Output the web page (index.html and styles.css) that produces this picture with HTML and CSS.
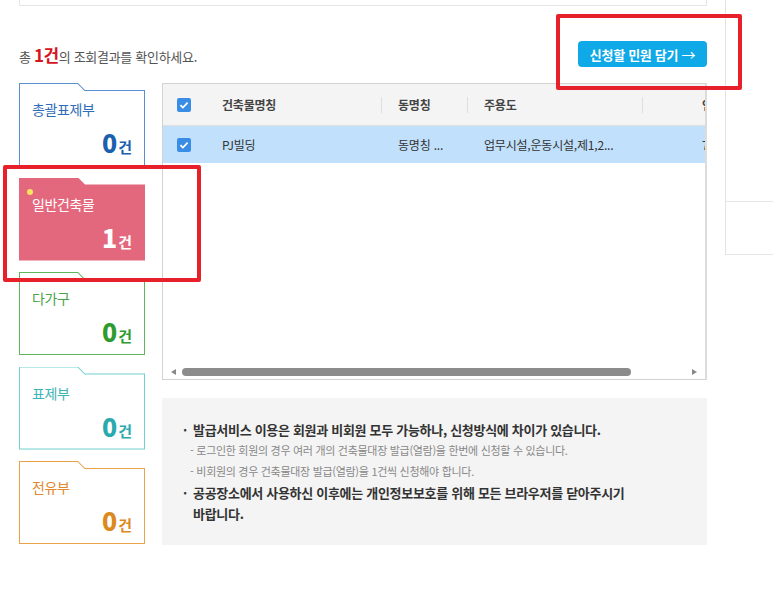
FILE: index.html
```html
<!DOCTYPE html>
<html lang="ko">
<head>
  <meta charset="UTF-8" />
  <meta name="viewport" content="width=device-width, initial-scale=1" />
  <title>건축물대장 조회결과</title>
  <link rel="stylesheet" href="styles.css">
</head>
<body>

  <div class="page">
    <div class="main">
      <div class="search-box"></div>

      <div class="result-bar">
        <p class="result-count">총 <strong>1건</strong>의 조회결과를 확인하세요.</p>
        <button class="btn-add" type="button">신청할 민원 담기 <span class="arrow">→</span></button>
      </div>

      <div class="result">
        <ul class="type-list">
          <li class="type type-total">
            <span class="type-name">총괄표제부</span>
            <span class="type-count"><b>0</b>건</span>
          </li>
          <li class="type type-general active">
            <span class="type-name">일반건축물</span>
            <span class="type-count"><b>1</b>건</span>
          </li>
          <li class="type type-multi">
            <span class="type-name">다가구</span>
            <span class="type-count"><b>0</b>건</span>
          </li>
          <li class="type type-title">
            <span class="type-name">표제부</span>
            <span class="type-count"><b>0</b>건</span>
          </li>
          <li class="type type-unit">
            <span class="type-name">전유부</span>
            <span class="type-count"><b>0</b>건</span>
          </li>
        </ul>

        <div class="result-body">
          <div class="grid">
            <div class="grid-head">
              <div class="cell cell-check">
                <svg class="check" viewBox="0 0 14 14"><rect width="14" height="14" rx="2" fill="#3a8de4"/><path d="M3.4 7.1l2.5 2.5 4.7-4.9" fill="none" stroke="#fff" stroke-width="1.7"/></svg>
              </div>
              <div class="cell">건축물명칭</div>
              <div class="cell sep">동명칭</div>
              <div class="cell sep">주용도</div>
              <div class="cell sep cell-last">연면적</div>
            </div>
            <div class="grid-row selected">
              <div class="cell cell-check">
                <svg class="check" viewBox="0 0 14 14"><rect width="14" height="14" rx="2" fill="#3a8de4"/><path d="M3.4 7.1l2.5 2.5 4.7-4.9" fill="none" stroke="#fff" stroke-width="1.7"/></svg>
              </div>
              <div class="cell">PJ빌딩</div>
              <div class="cell">동명칭 ...</div>
              <div class="cell">업무시설,운동시설,제1,2...</div>
              <div class="cell cell-last">7,512.3</div>
            </div>
            <div class="grid-empty"></div>
            <div class="grid-scroll">
              <span class="scroll-arrow left"></span>
              <span class="scroll-thumb"></span>
              <span class="scroll-arrow right"></span>
            </div>
          </div>

          <div class="notice">
            <ul>
              <li class="notice-main">발급서비스 이용은 회원과 비회원 모두 가능하나, 신청방식에 차이가 있습니다.</li>
              <li class="notice-sub">- 로그인한 회원의 경우 여러 개의 건축물대장 발급(열람)을 한번에 신청할 수 있습니다.</li>
              <li class="notice-sub">- 비회원의 경우 건축물대장 발급(열람)을 1건씩 신청해야 합니다.</li>
              <li class="notice-main">공공장소에서 사용하신 이후에는 개인정보보호를 위해 모든 브라우저를 닫아주시기 바랍니다.</li>
            </ul>
          </div>
        </div>
      </div>
    </div>

    <aside class="side">
      <div class="side-top"></div>
      <div class="side-bottom"></div>
    </aside>
  </div>

  <!-- 강조 표시 -->
  <div class="mark mark-btn"></div>
  <div class="mark mark-card"></div>

</body>
</html>
```

FILE: styles.css
```css
body {
  margin: 0;
  background: #fff;
  font-family: "Noto Sans CJK KR", "Noto Sans", sans-serif;
  color: #333;
}

ul {
  margin: 0;
  padding: 0;
  list-style: none;
}

.page {
  display: flex;
  align-items: flex-start;
}

.main {
  width: 688px;
  padding-left: 19px;
}

.search-box {
  height: 5px;
  border: 1px solid #e6e6e6;
  border-top: 0;
}

/* 조회결과 건수 + 담기 버튼 */
.result-bar {
  display: flex;
  align-items: center;
  justify-content: space-between;
  margin-top: 35px;
  height: 26px;
}

.result-count {
  margin: 0;
  font-size: 13px;
  color: #555;
  letter-spacing: -0.3px;
}

.result-count strong {
  color: #d5141c;
  font-size: 17px;
  letter-spacing: -0.5px;
}

.btn-add {
  height: 26px;
  width: 129px;
  padding: 0;
  border: 0;
  border-radius: 4px;
  background: #0fa9e8;
  color: #fff;
  font-family: inherit;
  font-size: 13px;
  font-weight: bold;
  letter-spacing: -0.3px;
  cursor: pointer;
}

.btn-add .arrow {
  font-weight: normal;
  font-size: 14px;
}

.result {
  display: flex;
  gap: 17px;
  margin-top: 16px;
}

/* 왼쪽 대장 종류 탭 */
.type-list {
  width: 126px;
  flex: none;
}

.type {
  --clr: #5a8fd2;
  --clr-text: #2f6cb8;
  --clr-num: #1b5fae;
  position: relative;
  height: 83px;
  margin-bottom: 11.5px;
  background: var(--clr);
  clip-path: polygon(0 0, 59px 0, 66px 7px, 100% 7px, 100% 100%, 0 100%);
}

.type::before {
  content: "";
  position: absolute;
  inset: 0;
  background: #fff;
  clip-path: polygon(1px 1px, 58.6px 1px, 65.6px 8px, calc(100% - 1px) 8px, calc(100% - 1px) calc(100% - 1px), 1px calc(100% - 1px));
}

.type-name,
.type-count {
  position: relative;
  display: block;
}

.type-name {
  padding: 18px 0 0 13px;
  font-size: 14px;
  line-height: 17px;
  color: var(--clr-text);
  letter-spacing: -0.4px;
}

.type-count {
  margin-top: 10px;
  padding-right: 13px;
  text-align: right;
  font-size: 15px;
  font-weight: bold;
  line-height: 28px;
  color: var(--clr-num);
}

.type-count b {
  font-size: 25px;
  letter-spacing: 1px;
}

.type-multi {
  --clr: #5cb65c;
  --clr-text: #4ba24b;
  --clr-num: #2f9b2f;
}

.type-title {
  --clr: #72d0d2;
  --clr-text: #3db4b6;
  --clr-num: #2aaaae;
}

.type-unit {
  --clr: #eaa24a;
  --clr-text: #e0892e;
  --clr-num: #dc8a1e;
}

.type.active {
  --clr: #e4687d;
  --clr-text: #fff;
  --clr-num: #fff;
}

.type.active::before {
  display: none;
}

.type.active::after {
  content: "";
  position: absolute;
  left: 8px;
  top: 11px;
  width: 6px;
  height: 6px;
  border-radius: 50%;
  background: #f8e45c;
}

/* 조회 목록 */
.result-body {
  width: 545px;
}

.grid {
  border: 1px solid #d3d3d3;
  border-right-width: 2px;
  border-right-color: #dcdcdc;
  overflow: hidden;
}

.grid-head,
.grid-row {
  display: grid;
  grid-template-columns: 42px 176px 86px 175px 130px;
  width: 609px;
  font-size: 12px;
  white-space: nowrap;
  letter-spacing: -0.2px;
}

.grid-head {
  height: 41px;
  background: #f4f4f4;
  border-bottom: 1px solid #e0e0e0;
  font-weight: bold;
  color: #444;
}

.grid-row {
  height: 37px;
  color: #333;
}

.grid-row.selected {
  background: #c0e0fb;
}

.cell {
  position: relative;
  display: flex;
  align-items: center;
  padding-left: 17px;
  overflow: hidden;
}

.cell-check {
  justify-content: center;
  padding-left: 0;
}

.cell-last {
  padding-left: 60px;
}

.grid-head .sep::before {
  content: "";
  position: absolute;
  left: 0;
  top: 13px;
  width: 1px;
  height: 16px;
  background: #dedede;
}

.check {
  width: 14px;
  height: 14px;
  display: block;
}

.grid-empty {
  height: 200px;
}

.grid-scroll {
  position: relative;
  height: 16px;
}

.scroll-thumb {
  position: absolute;
  left: 19px;
  right: 74px;
  top: 5px;
  height: 8px;
  border-radius: 4px;
  background: #8c8c8c;
}

.scroll-arrow {
  position: absolute;
  top: 6px;
  width: 0;
  height: 0;
  border-top: 3.5px solid transparent;
  border-bottom: 3.5px solid transparent;
}

.scroll-arrow.left {
  left: 8px;
  border-right: 5px solid #888;
}

.scroll-arrow.right {
  right: 8px;
  border-left: 5px solid #888;
}

/* 안내 문구 */
.notice {
  margin-top: 18px;
  height: 126px;
  padding: 21px 0 0 21px;
  background: #f4f4f4;
}

.notice ul {
  width: 470px;
  word-break: keep-all;
}

.notice li {
  line-height: 21px;
  letter-spacing: -0.3px;
}

.notice-main {
  position: relative;
  padding-left: 10px;
  font-size: 13px;
  font-weight: bold;
  color: #333;
}

.notice-main::before {
  content: "·";
  position: absolute;
  left: 0;
}

.notice-sub {
  padding-left: 7px;
  font-size: 11px;
  color: #888;
}

/* 오른쪽 영역 */
.side {
  flex: 1;
  margin-left: 18px;
  border-left: 1px solid #e3e3e3;
}

.side-top {
  height: 201px;
  border-bottom: 1px solid #e6e6e6;
}

.side-bottom {
  height: 52px;
  border-bottom: 1px solid #e6e6e6;
}

/* 빨간 강조 박스 */
.mark {
  position: absolute;
  border: 4px solid #e8202a;
  border-radius: 2px;
  pointer-events: none;
}

.mark-btn {
  left: 556px;
  top: 14px;
  width: 178px;
  height: 68px;
}

.mark-card {
  left: 3px;
  top: 165px;
  width: 190px;
  height: 109px;
}
```
